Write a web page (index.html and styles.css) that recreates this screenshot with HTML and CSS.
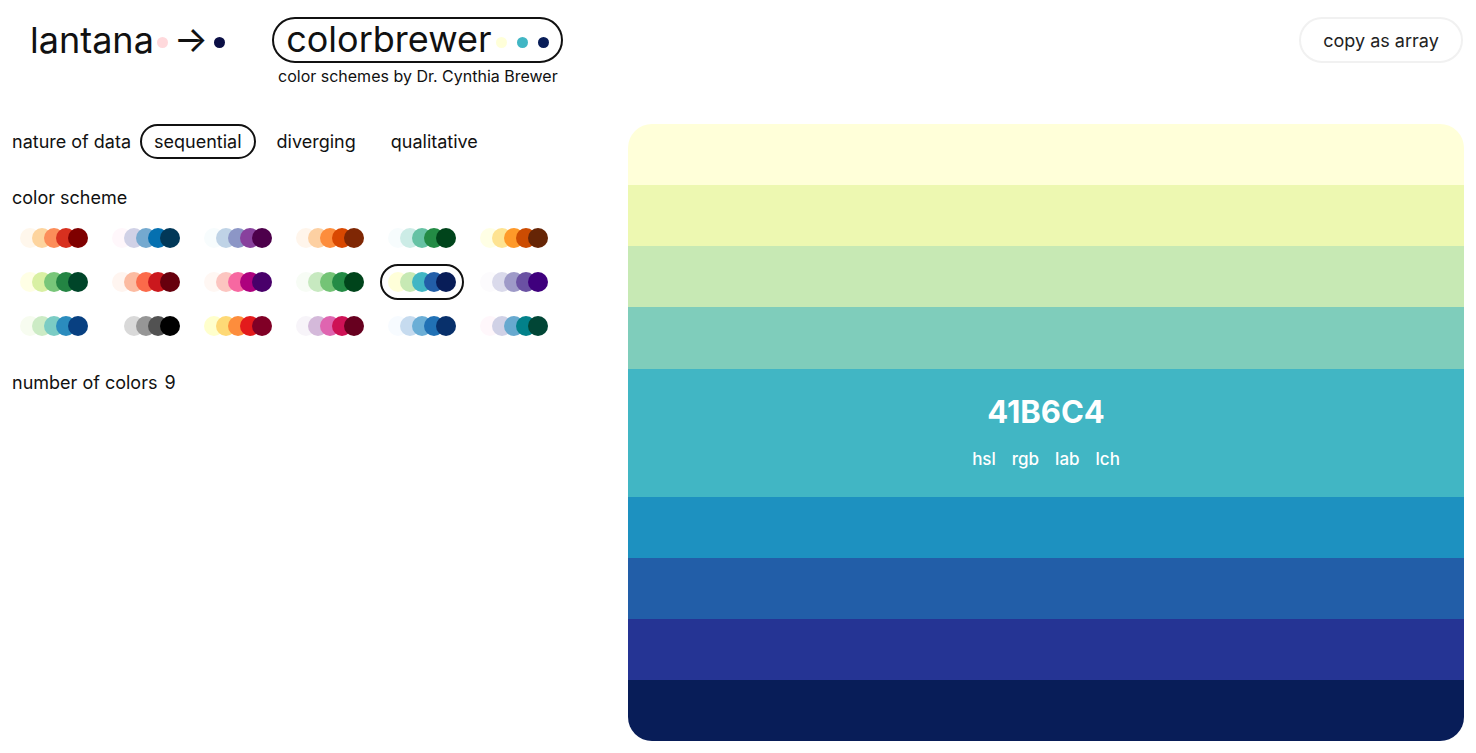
FILE: index.html
```html
<!DOCTYPE html>
<html lang="en">
<head>
<meta charset="utf-8">
<title>lantana — colorbrewer</title>
<link rel="stylesheet" href="styles.css">
</head>
<body>
<header class="top">
  <div class="brand">
    <span class="brand-name">lantana</span>
    <span class="dot dot-pink"></span>
    <span class="arrow">→</span>
    <span class="dot dot-navy"></span>
  </div>
  <div class="cb">
    <div class="cb-pill">
      <span class="cb-name">colorbrewer</span>
      <span class="dot dot-cream"></span>
      <span class="dot dot-teal"></span>
      <span class="dot dot-navy2"></span>
    </div>
    <div class="cb-sub">color schemes by Dr. Cynthia Brewer</div>
  </div>
  <button class="copy">copy as array</button>
</header>
<main class="layout">
  <section class="controls">
    <div class="row nature">
      <span class="label">nature of data</span>
      <span class="opt active">sequential</span>
      <span class="opt">diverging</span>
      <span class="opt">qualitative</span>
    </div>
    <div class="label block">color scheme</div>
    <div class="schemes">
      <div class="sw"><i style="background:#fff7ec"></i><i style="background:#fdd49e"></i><i style="background:#fc8d59"></i><i style="background:#d7301f"></i><i style="background:#7f0000"></i></div>
      <div class="sw"><i style="background:#fff7fb"></i><i style="background:#d0d1e6"></i><i style="background:#74a9cf"></i><i style="background:#0570b0"></i><i style="background:#023858"></i></div>
      <div class="sw"><i style="background:#f7fcfd"></i><i style="background:#bfd3e6"></i><i style="background:#8c96c6"></i><i style="background:#88419d"></i><i style="background:#4d004b"></i></div>
      <div class="sw"><i style="background:#fff5eb"></i><i style="background:#fdd0a2"></i><i style="background:#fd8d3c"></i><i style="background:#d94801"></i><i style="background:#7f2704"></i></div>
      <div class="sw"><i style="background:#f7fcfd"></i><i style="background:#ccece6"></i><i style="background:#66c2a4"></i><i style="background:#238b45"></i><i style="background:#00441b"></i></div>
      <div class="sw"><i style="background:#ffffe5"></i><i style="background:#fee391"></i><i style="background:#fe9929"></i><i style="background:#cc4c02"></i><i style="background:#662506"></i></div>
      <div class="sw"><i style="background:#ffffe5"></i><i style="background:#d9f0a3"></i><i style="background:#78c679"></i><i style="background:#238443"></i><i style="background:#004529"></i></div>
      <div class="sw"><i style="background:#fff5f0"></i><i style="background:#fcbba1"></i><i style="background:#fb6a4a"></i><i style="background:#cb181d"></i><i style="background:#67000d"></i></div>
      <div class="sw"><i style="background:#fff7f3"></i><i style="background:#fcc5c0"></i><i style="background:#f768a1"></i><i style="background:#ae017e"></i><i style="background:#49006a"></i></div>
      <div class="sw"><i style="background:#f7fcf5"></i><i style="background:#c7e9c0"></i><i style="background:#74c476"></i><i style="background:#238b45"></i><i style="background:#00441b"></i></div>
      <div class="sw selected"><i style="background:#ffffd9"></i><i style="background:#c7e9b4"></i><i style="background:#41b6c4"></i><i style="background:#225ea8"></i><i style="background:#081d58"></i></div>
      <div class="sw"><i style="background:#fcfbfd"></i><i style="background:#dadaeb"></i><i style="background:#9e9ac8"></i><i style="background:#6a51a3"></i><i style="background:#3f007d"></i></div>
      <div class="sw"><i style="background:#f7fcf0"></i><i style="background:#ccebc5"></i><i style="background:#7bccc4"></i><i style="background:#2b8cbe"></i><i style="background:#084081"></i></div>
      <div class="sw"><i style="background:#ffffff"></i><i style="background:#d9d9d9"></i><i style="background:#969696"></i><i style="background:#525252"></i><i style="background:#000000"></i></div>
      <div class="sw"><i style="background:#ffffcc"></i><i style="background:#fed976"></i><i style="background:#fd8d3c"></i><i style="background:#e31a1c"></i><i style="background:#800026"></i></div>
      <div class="sw"><i style="background:#f7f4f9"></i><i style="background:#d4b9da"></i><i style="background:#df65b0"></i><i style="background:#ce1256"></i><i style="background:#67001f"></i></div>
      <div class="sw"><i style="background:#f7fbff"></i><i style="background:#c6dbef"></i><i style="background:#6baed6"></i><i style="background:#2171b5"></i><i style="background:#08306b"></i></div>
      <div class="sw"><i style="background:#fff7fb"></i><i style="background:#d0d1e6"></i><i style="background:#67a9cf"></i><i style="background:#02818a"></i><i style="background:#014636"></i></div>
    </div>
    <div class="row count">
      <span class="label">number of colors</span>
      <span class="num">9</span>
    </div>
  </section>
  <section class="panel">
    <div class="band" style="background:#ffffd9"></div>
    <div class="band" style="background:#edf8b1"></div>
    <div class="band" style="background:#c7e9b4"></div>
    <div class="band" style="background:#7fcdbb"></div>
    <div class="band band-open" style="background:#41b6c4">
      <div class="hex">41B6C4</div>
      <div class="formats"><span>hsl</span><span>rgb</span><span>lab</span><span>lch</span></div>
    </div>
    <div class="band" style="background:#1d91c0"></div>
    <div class="band" style="background:#225ea8"></div>
    <div class="band" style="background:#253494"></div>
    <div class="band" style="background:#081d58"></div>
  </section>
</main>
</body>
</html>
```
FILE: styles.css
```css
* { box-sizing: border-box; }
html, body { height: 100%; }
body {
  margin: 0;
  font-family: Inter, "Noto Sans", sans-serif;
  color: #111;
  background: #fff;
  display: flex;
  flex-direction: column;
  height: 100vh;
}
.top {
  height: 124px;
  flex: none;
  display: flex;
  align-items: flex-start;
  padding: 17px 13px 0 30px;
}
.brand {
  display: flex;
  align-items: center;
  height: 46px;
}
.brand-name { font-size: 36px; line-height: 1; }
.dot {
  display: inline-block;
  width: 11px;
  height: 11px;
  border-radius: 50%;
}
.dot-pink { background: #ffd9dc; margin-left: 3px; margin-top: 4px; }
.arrow { font-size: 36px; line-height: 1; margin-left: 6px; margin-top: -3px; }
.dot-navy { background: #0b0f45; margin-left: 6px; margin-top: 4px; }
.cb {
  margin-left: 47px;
  display: flex;
  flex-direction: column;
  align-items: center;
}
.cb-pill {
  height: 46px;
  border: 2px solid #111;
  border-radius: 23px;
  display: flex;
  align-items: center;
  padding: 0 12px 0 12px;
}
.cb-name { font-size: 36px; line-height: 1; margin-top: -2px; }
.dot-cream { background: #ffffd9; margin-left: 5px; margin-top: 4px; }
.dot-teal { background: #41b6c4; margin-left: 10px; margin-top: 4px; }
.dot-navy2 { background: #081d58; margin-left: 10px; margin-top: 4px; }
.cb-sub { font-size: 16px; margin-top: 3px; }
.copy {
  margin-left: auto;
  height: 46px;
  width: 164px;
  border: 2px solid #f1f1f1;
  border-radius: 23px;
  background: #fff;
  font-family: inherit;
  font-size: 18px;
  color: #222;
}
.layout {
  flex: 1;
  min-height: 0;
  display: grid;
  grid-template-columns: 1fr 836px;
  column-gap: 12px;
  padding: 0 12px 12px;
}
.controls { display: flex; flex-direction: column; align-items: flex-start; }
.label { font-size: 18px; }
.row { display: flex; align-items: center; }
.nature { height: 35px; gap: 7px; }
.nature .label { margin-right: 2px; }
.opt {
  font-size: 18px;
  height: 35px;
  display: flex;
  align-items: center;
  padding: 0 12px;
  border: 2px solid transparent;
  border-radius: 18px;
}
.opt.active { border-color: #111; }
.block { margin-top: 29px; line-height: 20px; }
.schemes {
  margin-top: 12px;
  display: grid;
  grid-template-columns: repeat(6, 84px);
  gap: 8px;
}
.sw {
  height: 36px;
  padding: 0 6px;
  border: 2px solid transparent;
  border-radius: 18px;
  display: flex;
  align-items: center;
}
.sw.selected { border-color: #111; }
.sw i {
  display: block;
  width: 20px;
  height: 20px;
  border-radius: 50%;
  flex: none;
}
.sw i + i { margin-left: -8px; }
.count { margin-top: 29px; line-height: 20px; }
.num { font-size: 18px; margin-left: 7px; }
.panel {
  display: flex;
  flex-direction: column;
  border-radius: 24px;
  overflow: hidden;
}
.band { flex: 1; }
.band-open {
  flex: none;
  height: 128px;
  display: flex;
  flex-direction: column;
  align-items: center;
  justify-content: center;
  color: #fff;
}
.hex { font-size: 31px; font-weight: 700; line-height: 31px; }
.formats { display: flex; gap: 16px; margin-top: 22px; font-size: 17px; font-weight: 500; line-height: 20px; }
```
